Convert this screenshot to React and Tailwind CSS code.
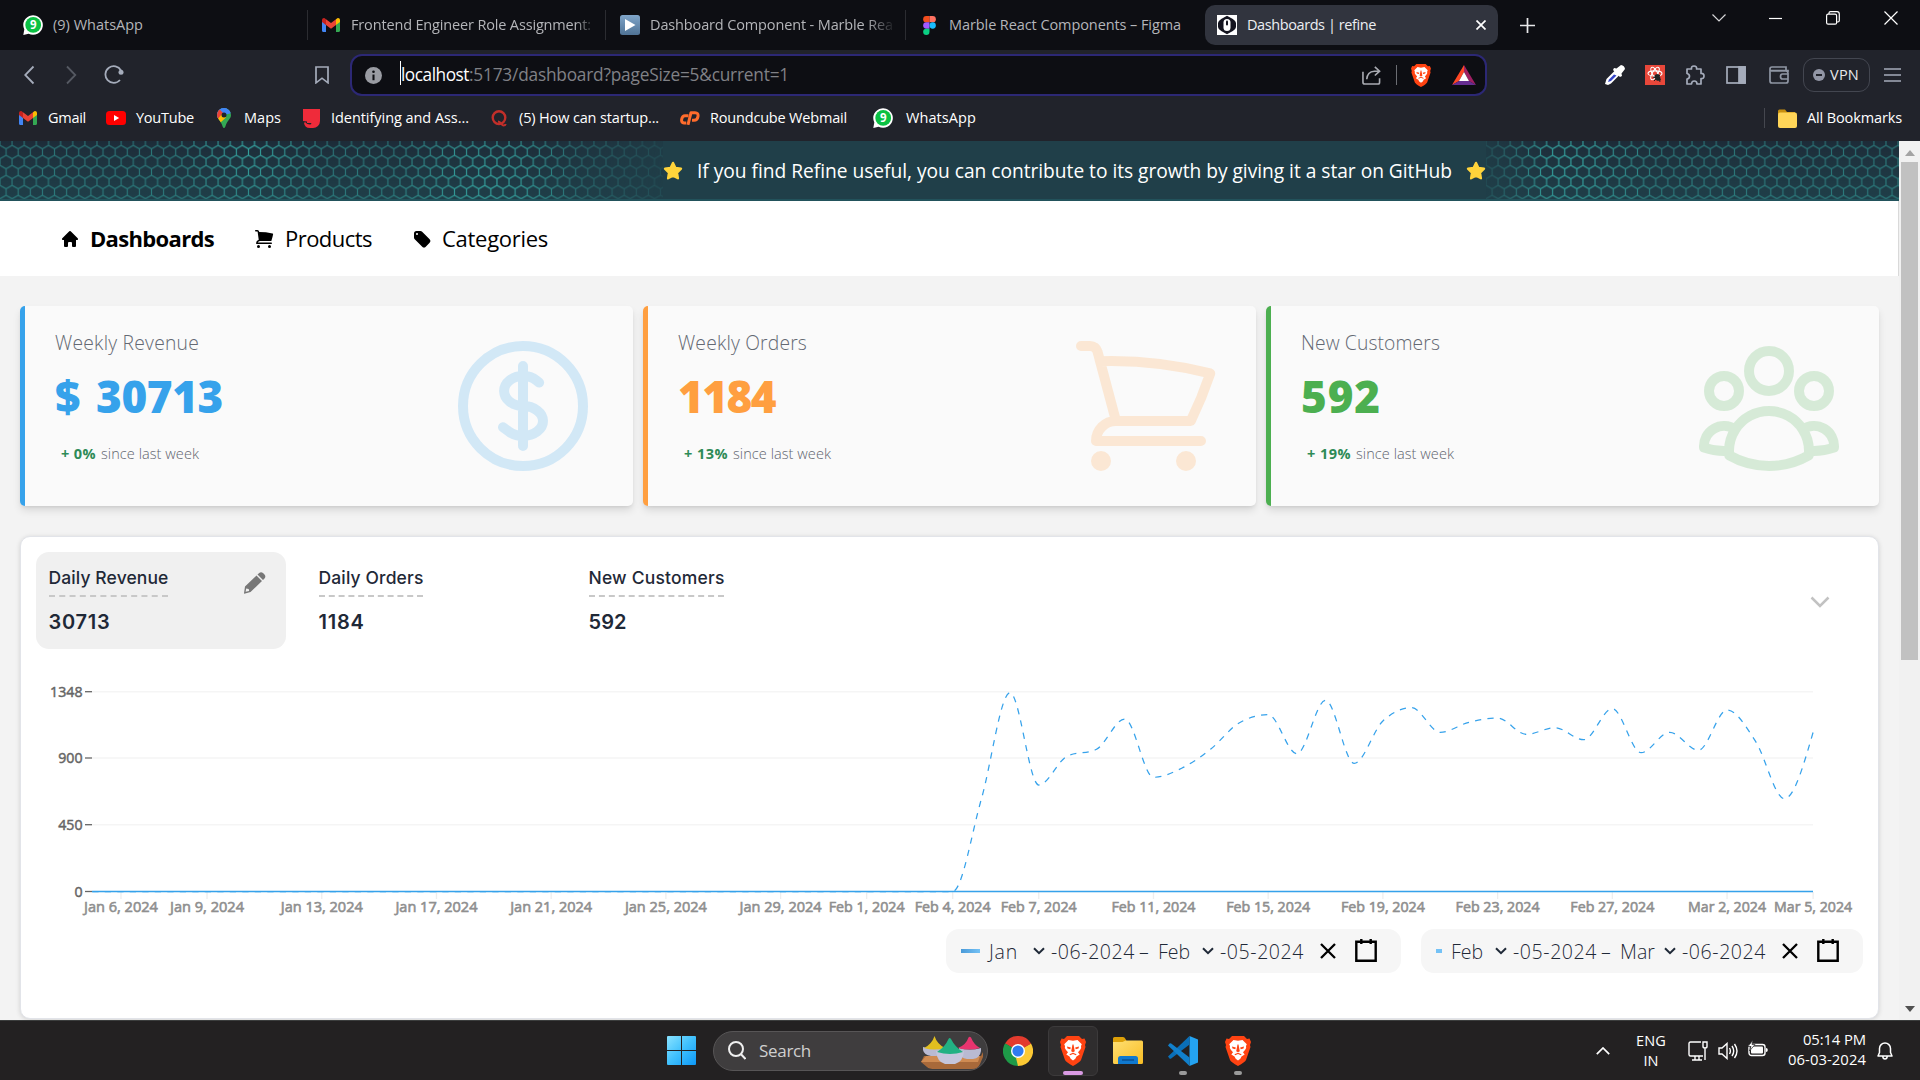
import React, { useLayoutEffect, useRef, useState } from "react";
import { HiOutlineCurrencyDollar, HiOutlineShoppingCart, HiOutlineUserGroup, HiMiniHome, HiMiniShoppingCart, HiMiniTag } from "react-icons/hi2";

/* Single line of text, tracked so that it fills the width of its box. */
function Fit({ className = "", children }) {
  const box = useRef(null);
  const line = useRef(null);
  const [spacing, setSpacing] = useState(0);
  useLayoutEffect(() => {
    const natural = line.current.getBoundingClientRect().width;
    setSpacing((box.current.clientWidth - natural) / String(children).length);
  }, []);
  return (
    <span ref={box} className={"block shrink-0 whitespace-nowrap " + className}>
      <span ref={line} className="inline-block" style={{ letterSpacing: spacing + "px" }}>
        {children}
      </span>
    </span>
  );
}

/* ---------- logos ---------- */

function WhatsAppBadge() {
  return (
    <svg viewBox="0 0 20 20" className="size-5 shrink-0">
      <path d="M0.3 20 L1.3 14.5 A9.8 9.8 0 1 1 5.6 18.8Z" fill="#fff" />
      <circle cx="10.2" cy="9.9" r="7.9" fill="#0ac143" />
      <text x="10.2" y="14" textAnchor="middle" fontSize="11.5" fontWeight="700" fill="#fff" fontFamily="Open Sans, sans-serif">9</text>
    </svg>
  );
}

function GmailLogo() {
  return (
    <svg viewBox="0 0 18 14" className="h-[14px] w-[18px] shrink-0">
      <path d="M0 2v10.8C0 13.5.5 14 1.2 14H4V6.5Z" fill="#4285f4" />
      <path d="M18 2v10.8c0 .7-.5 1.2-1.2 1.2H14V6.500Z" fill="#34a853" />
      <path d="M14 1.300V7l4-3V2.200C18 .2 15.800-.6 14.400.9Z" fill="#fbbc04" />
      <path d="M4 1.300V7L0 4V2.200C0 .2 2.200-.6 3.600.9Z" fill="#c5221f" />
      <path d="M4 7V1.300l5 3.700 5-3.700V7l-5 3.800Z" fill="#ea4335" />
    </svg>
  );
}

function PlayLogo() {
  return (
    <svg viewBox="0 0 20 20" className="size-5 shrink-0">
      <defs>
        <linearGradient id="play" x2="0" y2="1">
          <stop stopColor="#7fa5c9" />
          <stop offset="1" stopColor="#4f7295" />
        </linearGradient>
      </defs>
      <rect width="20" height="20" rx="2.500" fill="url(#play)" />
      <path d="M5 4l10.500 6L5 16Z" fill="#fff" />
    </svg>
  );
}

function FigmaLogo() {
  return (
    <svg viewBox="0 0 12 18" className="h-[19px] w-[13px] shrink-0">
      <path d="M3 0h3v6H3a3 3 0 0 1 0-6Z" fill="#f24e1e" />
      <path d="M6 0h3a3 3 0 0 1 0 6H6Z" fill="#ff7262" />
      <path d="M3 6h3v6H3a3 3 0 0 1 0-6Z" fill="#a259ff" />
      <circle cx="9" cy="9" r="3" fill="#1abcfe" />
      <path d="M3 12h3v3a3 3 0 1 1-3-3Z" fill="#0acf83" />
    </svg>
  );
}

function RefineLogo() {
  return (
    <svg viewBox="0 0 20 20" className="size-5 shrink-0">
      <rect width="20" height="20" fill="#fff" />
      <path d="M10 .800l5.800 3.100Q19 6 19 8v4q0 2-3.200 4.100L10 19.200l-5.800-3.100Q1 14 1 12V8q0-2 3.200-4.100Z" fill="#14141f" />
      <rect x="6.500" y="4" width="7" height="12" rx="3.500" fill="#fff" />
      <path d="M10 6.500v3" stroke="#14141f" strokeWidth="2" strokeLinecap="round" />
    </svg>
  );
}

function BraveLogo({ className }) {
  return (
    <svg viewBox="0 0 26 30" className={"shrink-0 " + className}>
      <path d="M7 0h12l3 3 2.500-.5L26 6l-1 3 .5 2-4.500 13q-1 2-8 6-7-4-8-6L.5 11 1 9 0 6l1.500-3.500L4 3Z" fill="#ff4312" />
      <path d="M13 4.800l4.500-.8 4.300 4.300-.8 1.700q.8 2-1 4l-2 2.300 1.700 2.200-3.200 2-1.200 2.200-2.300 1.800-2.300-1.800-1.200-2.200-3.200-2L8 16.300 6 14q-1.800-2-1-4l-.8-1.700L8.500 4Z" fill="#fff" />
      <path d="M7 10.500l3.800 1-.5 1.700-2.800-.7ZM19 10.500l-3.800 1 .5 1.700 2.800-.7ZM12.500 8.500h1l1.300 6.800-1.800 1-1.800-1ZM9.500 18.200l3.500-1.500 3.500 1.500-.5 1L13 18l-3 1.200Z" fill="#ff4312" />
    </svg>
  );
}

function BatLogo() {
  return (
    <svg viewBox="0 0 24 20" className="h-5 w-6 shrink-0">
      <path d="M12 0L0 20l7-4 5-9Z" fill="#ff4724" />
      <path d="M12 0l12 20-7-4-5-9Z" fill="#9e1f63" />
      <path d="M0 20h24l-7-4H7Z" fill="#662d91" />
      <path d="M12 7l5 9H7Z" fill="#fff" />
    </svg>
  );
}

function CpanelLogo() {
  return (
    <svg viewBox="0 0 20 14" className="h-[14px] w-5 shrink-0" fill="none" stroke="#ff6c2c" strokeWidth="3" strokeLinejoin="round">
      <path d="M8.500 4.700H5Q2.300 4.700 1.700 8.200T4 12H6.300" />
      <path d="M8 13.800L11 1.700H15Q18.600 1.700 18 5.500T14 9.300H12" />
    </svg>
  );
}

function YouTubeLogo() {
  return (
    <svg viewBox="0 0 20 14" className="h-[14px] w-5 shrink-0">
      <rect width="20" height="14" rx="3.500" fill="#f00" />
      <path d="M8 4l5.200 3L8 10Z" fill="#fff" />
    </svg>
  );
}

function MapsLogo() {
  return (
    <svg viewBox="0 0 14 20" className="h-5 w-[14px] shrink-0">
      <defs>
        <clipPath id="pin">
          <path d="M7 0a7 7 0 0 1 7 7c0 4-4 5.500-5.600 11.500Q7.800 20 7 20t-1.400-1.500C4 12.500 0 11 0 7a7 7 0 0 1 7-7Z" />
        </clipPath>
      </defs>
      <g clipPath="url(#pin)">
        <rect width="14" height="20" fill="#34a853" />
        <path d="M-1-1h16v6L7 7 2 13Z" fill="#4285f4" />
        <path d="M0 12L11-1 4-1-2 6Z" fill="#4285f4" />
        <path d="M-1 2l3.500-.8L7 6-1 13Z" fill="#ea4335" />
        <path d="M0 12L5 6l4 3.500L3 15Z" fill="#fbbc04" />
      </g>
      <circle cx="7" cy="7" r="2.500" fill="#21232b" />
    </svg>
  );
}

function JusticeLogo() {
  return (
    <svg viewBox="0 0 17 19" className="h-[19px] w-[17px] shrink-0">
      <path d="M0 0h17v12a7 7 0 0 1-7 7H7a6 6 0 0 1-6-5l1-1q2 2.500 5 2.500 2-.3 1-1.500H4v-1.500L0 12Z" fill="#ef2b3a" />
    </svg>
  );
}

function QuoraLogo() {
  return (
    <svg viewBox="0 0 16 17" className="h-[17px] w-4 shrink-0" fill="none" stroke="#c22f2a" strokeWidth="2.400">
      <ellipse cx="8" cy="7.600" rx="6.300" ry="6.400" />
      <path d="M7 11.500c3 0 3.500 4 5.500 4q1.800 0 2.300-1.500" strokeWidth="2" />
    </svg>
  );
}

function WindowsLogo() {
  return (
    <svg viewBox="0 0 29 29" className="size-[29px] shrink-0">
      <defs>
        <linearGradient id="win" x2="1" y2="1" gradientUnits="userSpaceOnUse" x1="0" y1="0" gradientTransform="scale(29)">
          <stop stopColor="#8ae3ff" />
          <stop offset=".5" stopColor="#3fc0fd" />
          <stop offset="1" stopColor="#0d98f7" />
        </linearGradient>
      </defs>
      <path d="M1 0h13v14H0V1Q0 0 1 0ZM15 0h13q1 0 1 1v13H15ZM0 15h14v14H1q-1 0-1-1ZM15 15h14v13q0 1-1 1H15Z" fill="url(#win)" />
    </svg>
  );
}

function HoliBowls() {
  return (
    <svg viewBox="0 0 62 33" className="h-[33px] w-[62px] shrink-0">
      <path d="M3 20h57l2-4v5l-3 7q-2 5-8 5H14q-6 0-8-2l-6-5Z" fill="#a8693a" />
      <path d="M5 20h54l-2 6H0Z" fill="#cf8b52" />
      <path d="M2 11q11 3 21 0v3q-1 6-8 6h-5q-7-1-8-6ZM38 12q11 3 22 0v3q-1 7-8 8h-6q-7-1-8-8Z" fill="#b9bad2" />
      <path d="M3 12Q11 8 13.500 0 16 8 24 12q-11 3-21 0Z" fill="#e2bf1f" />
      <path d="M37 12q8-3 10.500-10.500Q48.500 0 50 1.500 53 9 59 12q-11 3-22 0Z" fill="#e8346f" />
      <path d="M15 15q14 3 28 0-1 11-9 13H24q-8-2-9-13Z" fill="#c5c6dc" />
      <path d="M16 16Q24 11 27.500 3q1-2 2.500 0Q34 11 42 16q-13 4-26 0Z" fill="#22b183" />
    </svg>
  );
}

function ChromeLogo() {
  return (
    <svg viewBox="-15 -15 30 30" className="size-[30px] shrink-0">
      <path d="M0 0L-13-7.500A15 15 0 0 1 13-7.500Z" fill="#e33b2e" />
      <path d="M0 0L13-7.500A15 15 0 0 1 0 15Z" fill="#fcc934" />
      <path d="M0 0L0 15A15 15 0 0 1-13-7.500Z" fill="#1e9a48" />
      <path d="M-13-7.500h26L6-3.500 0-7Z" fill="#e33b2e" />
      <path d="M-6 3.500L-13-7.500-6-3.500Z" fill="#1e9a48" />
      <path d="M6 3.500L0 15-2 7Z" fill="#fcc934" />
      <circle r="7" fill="#fff" />
      <circle r="5.600" fill="#2f7bf0" />
    </svg>
  );
}

function ExplorerLogo() {
  return (
    <svg viewBox="0 0 30 27" className="h-[27px] w-[30px] shrink-0">
      <defs>
        <linearGradient id="folder" x2="1" y2="1">
          <stop stopColor="#ffdf73" />
          <stop offset="1" stopColor="#f8bd24" />
        </linearGradient>
      </defs>
      <path d="M0 1.500Q0 0 1.500 0H10q1.500 0 2.500 2l1 2H28v5H0Z" fill="#dda008" />
      <path d="M0 5h9.500l3-1.500H28.500Q30 3.500 30 5v20.500Q30 27 28.500 27h-27Q0 27 0 25.500Z" fill="url(#folder)" />
      <path d="M5 27v-5.500Q5 19 7.500 19h15q2.500 0 2.500 2.500V27Z" fill="#1079cf" />
      <path d="M9 23h12" stroke="#0a4a8a" strokeWidth="1.300" />
    </svg>
  );
}

function VsCodeLogo() {
  return (
    <svg viewBox="0 0 30 30" className="size-[30px] shrink-0">
      <path d="M21.500 0L30 3.500v23L21.500 30Z" fill="#24a3f1" />
      <path d="M0 20.500L21.500 0v8.500L3.200 22.500q-1 .6-1.700 0Z" fill="#0a6fb8" />
      <path d="M0 9.500l1.500-2q.700-.600 1.700 0L21.500 21.500V30Z" fill="#1180cc" />
    </svg>
  );
}

/* ---------- browser chrome ---------- */

function TabBar() {
  return (
    <div className="flex h-[50px] shrink-0 items-center bg-[#0d0e13] text-[14.500px] leading-5 text-[#b4b5b9]">
      <div className="flex w-[307px] items-center gap-[10px] pl-[23px]">
        <WhatsAppBadge />
        <Fit className="w-[90px]">(9) WhatsApp</Fit>
      </div>
      <div className="flex h-[30px] w-[298px] items-center gap-[11px] border-l border-[#2b2c31] pl-[14px]">
        <GmailLogo />
        <div className="w-[244px] [mask-image:linear-gradient(to_right,black_92%,transparent)]">
          <Fit className="w-[240px]">Frontend Engineer Role Assignment:</Fit>
        </div>
      </div>
      <div className="flex h-[30px] w-[300px] items-center gap-[10px] border-l border-[#2b2c31] pl-[14px]">
        <PlayLogo />
        <div className="w-[246px] [mask-image:linear-gradient(to_right,black_88%,transparent)]">
          <Fit className="w-[243px]">Dashboard Component - Marble Rea</Fit>
        </div>
      </div>
      <div className="flex h-[30px] w-[300px] items-center gap-[13px] border-l border-[#2b2c31] pl-[17px]">
        <FigmaLogo />
        <Fit className="w-[232px]">Marble React Components – Figma</Fit>
      </div>
      <div className="flex h-10 w-[293px] items-center rounded-[10px] bg-[#31343e] pl-3 text-[#eceef2]">
        <RefineLogo />
        <Fit className="ml-[10px] w-[129px]">Dashboards | refine</Fit>
        <svg viewBox="0 0 10 10" className="ml-[100px] size-[10px]" stroke="#fff" strokeWidth="1.700">
          <path d="M.5.5l9 9M9.500.5l-9 9" />
        </svg>
      </div>
      <svg viewBox="0 0 14 14" className="ml-[22px] size-[15px]" stroke="#e8e8ea" strokeWidth="1.600">
        <path d="M7 0v14M0 7h14" />
      </svg>
      <div className="mb-[14px] ml-[177px] flex items-center">
        <svg viewBox="0 0 14 14" className="size-[14px]" fill="none" stroke="#d6d6d8" strokeWidth="1.200">
          <path d="M.5 3.500L7 10l6.500-6.500" />
        </svg>
        <svg viewBox="0 0 14 14" className="ml-[43px] size-[14px]" stroke="#fff" strokeWidth="1.200">
          <path d="M0 7.500h13" />
        </svg>
        <svg viewBox="0 0 14 14" className="ml-[43px] size-[14px]" fill="none" stroke="#fff" strokeWidth="1.200">
          <rect x=".6" y="3.200" width="10" height="10" rx="1.500" />
          <path d="M3 3V2Q3 .7 4.500.7H11q2.300 0 2.300 2.300v6.500q0 1.500-1.500 1.500h-1" />
        </svg>
        <svg viewBox="0 0 14 14" className="ml-[44px] size-[14px]" stroke="#fff" strokeWidth="1.200">
          <path d="M.5.5l13 13M13.500.5l-13 13" />
        </svg>
      </div>
    </div>
  );
}

function Toolbar() {
  return (
    <div className="flex h-[50px] shrink-0 items-center bg-[#21232b]">
      <svg viewBox="0 0 100 20" className="ml-[24px] h-5 w-[100px]" fill="none" strokeWidth="1.800">
        <path d="M9.500 1.500L1.200 10l8.300 8.500" stroke="#a5acbb" />
        <path d="M43 1.500l8.300 8.500L43 18.500" stroke="#555962" />
        <path d="M96 15A8.300 8.300 0 1 1 97 5.500" stroke="#a5acbb" />
        <circle cx="97" cy="7.200" r="2.500" fill="#a5acbb" />
      </svg>
      <svg viewBox="0 0 14 18" className="ml-[191px] h-[18px] w-[14px]" fill="none" stroke="#a5acbb" strokeWidth="1.700">
        <path d="M1 1h12v15.800l-6-4.600-6 4.600Z" />
      </svg>
      <div className="ml-[21px] flex h-[42px] w-[1137px] items-center rounded-[12px] border-[2.500px] border-[#2c2875] bg-[#0d0e13] pl-[13px] text-[17.300px]">
        <svg viewBox="0 0 18 18" className="size-[17px]">
          <circle cx="9" cy="9" r="9" fill="#9a9ca3" />
          <path d="M9 8v6" stroke="#0d0e13" strokeWidth="2.200" />
          <circle cx="9" cy="5" r="1.400" fill="#0d0e13" />
        </svg>
        <span className="mb-1 ml-[18px] h-6 w-px bg-white" />
        <Fit className="mb-px w-[68px] text-white">localhost</Fit>
        <Fit className="mb-px w-[320px] text-[#808186]">:5173/dashboard?pageSize=5&current=1</Fit>
        <svg viewBox="0 0 20 20" className="ml-[573px] size-[19px]" fill="none" stroke="#a9abb2" strokeWidth="1.700">
          <path d="M1 6v11q0 2 2 2h14q1.500 0 1.500-2v-4" />
          <path d="M5 14Q5.500 6 13 5.500h5M13.500 1L18.500 5.500 13.500 10" />
        </svg>
        <span className="ml-[15px] h-5 w-px bg-[#6b6d73]" />
        <BraveLogo className="ml-[14px] h-[23px] w-5" />
        <span className="ml-[21px]"><BatLogo /></span>
      </div>
      <svg viewBox="0 0 20 20" className="ml-[118px] size-5">
        <path d="M3 20l-3-1 1.500-5L10 5.500 14.500 10 6 18.500Z" fill="#fff" />
        <path d="M3 17l1-2.500 5-5 2.500 1L6 16Z" fill="#3546c9" />
        <path d="M9 3l2.500.500L16 0q3.500.500 4 4l-3.500 4.500.5 2.500-2 1L8 5Z" fill="#fff" />
      </svg>
      <svg viewBox="0 0 20 20" className="ml-5 size-5" fill="none" stroke="#fff" strokeWidth="1.100">
        <rect width="20" height="20" fill="#e8473a" stroke="none" />
        <ellipse cx="10" cy="8.500" rx="7" ry="2.600" />
        <ellipse cx="10" cy="8.500" rx="7" ry="2.600" transform="rotate(60 10 8.500)" />
        <ellipse cx="10" cy="8.500" rx="7" ry="2.600" transform="rotate(120 10 8.500)" />
        <ellipse cx="12.500" cy="12.500" rx="2.600" ry="3.600" fill="#222" stroke="none" transform="rotate(-30 12.500 12.500)" />
        <path d="M8 12l8 3M9 16l6-6M13 9l2 8" stroke="#222" strokeWidth="1" />
      </svg>
      <svg viewBox="0 0 20 20" className="ml-5 size-5" fill="none" stroke="#a5acbb" strokeWidth="1.700" strokeLinejoin="round">
        <path d="M2 4h4.500Q6 1 9 1t2.600 3H16v4.500q3-.3 3 2.500t-3 2.600V19h-4q0-3-2.700-3T6.500 19H2v-5q2.500-.4 2.500-2.700T2 8.500Z" />
      </svg>
      <svg viewBox="0 0 20 18" className="ml-[21px] h-[18px] w-5" fill="none" stroke="#a5acbb" strokeWidth="1.700">
        <rect x="1" y="1" width="18" height="16" />
        <rect x="13" y="1" width="6" height="16" fill="#a5acbb" />
      </svg>
      <svg viewBox="0 0 20 18" className="ml-[23px] h-[18px] w-5" fill="none" stroke="#8f96a4" strokeWidth="1.700">
        <path d="M19 6V4.500H1M17 4V1H3Q1 1 1 3v12q0 2 2 2h14q2 0 2-2V7Q19 5.500 17 5H2" />
        <path d="M19 8h-5.500q-2 0-2 2.500t2 2.500H19" />
      </svg>
      <div className="ml-[14px] flex h-[34px] w-[67px] items-center gap-[5px] rounded-[11px] border border-[#434650] pl-[9px] text-[14.500px] text-[#e8e9ec]">
        <span className="flex size-[12px] shrink-0 items-center justify-center rounded-full bg-[#9296a5]">
          <span className="h-[1.500px] w-[6px] bg-[#21232b]" />
        </span>
        <Fit className="w-[29px]">VPN</Fit>
      </div>
      <svg viewBox="0 0 17 14" className="ml-[14px] h-[14px] w-[17px]" stroke="#a5acbb" strokeWidth="1.600">
        <path d="M0 1h17M0 7h17M0 13h17" />
      </svg>
    </div>
  );
}

function Bookmarks() {
  return (
    <div className="flex h-[41px] shrink-0 items-center bg-[#21232b] pb-[5px] pl-[19px] text-[14.500px] leading-5 text-white">
      <GmailLogo />
      <Fit className="ml-[11px] w-[38px]">Gmail</Fit>
      <span className="ml-5"><YouTubeLogo /></span>
      <Fit className="ml-[10px] w-[58px]">YouTube</Fit>
      <span className="ml-[23px]"><MapsLogo /></span>
      <Fit className="ml-[13px] w-[37px]">Maps</Fit>
      <span className="ml-[22px]"><JusticeLogo /></span>
      <Fit className="ml-[11px] w-[138px]">Identifying and Ass...</Fit>
      <span className="ml-[22px]"><QuoraLogo /></span>
      <Fit className="ml-[12px] w-[140px]">(5) How can startup...</Fit>
      <span className="ml-[21px]"><CpanelLogo /></span>
      <Fit className="ml-[10px] w-[137px]">Roundcube Webmail</Fit>
      <span className="ml-[26px]"><WhatsAppBadge /></span>
      <Fit className="ml-[13px] w-[70px]">WhatsApp</Fit>
      <span className="ml-[788px] h-5 w-px bg-[#45474f]" />
      <svg viewBox="0 0 19 19" className="ml-[13px] size-[19px]">
        <path d="M0 2Q0 .5 1.500.500H7L9 3h8v4H0Z" fill="#c78f0f" />
        <rect y="3.500" width="19" height="15.500" rx="2" fill="#ffd558" />
      </svg>
      <Fit className="ml-[10px] w-[95px]">All Bookmarks</Fit>
    </div>
  );
}

/* ---------- page ---------- */

function Star() {
  return (
    <svg viewBox="0 0 20 20" className="size-5 shrink-0">
      <path d="M10 1.800l2.500 5.100 5.600.8-4 4 .9 5.700-5-2.700-5 2.700.9-5.700-4-4 5.600-.8Z" fill="#ffd43b" stroke="#ffd43b" strokeWidth="2.200" strokeLinejoin="round" />
    </svg>
  );
}

function HexField({ id, glows, edge, className }) {
  return (
    <svg className={className}>
      <defs>
        <pattern id={id + "p"} width="12.12" height="20" patternUnits="userSpaceOnUse" patternTransform="translate(0 4.300)">
          <path d="M0 0L6.060 3.500 12.120 0M6.060 3.500V10M6.060 10L0 13.500V20M6.060 10L12.120 13.500V20" fill="none" stroke="#38b2ac" strokeWidth="1.100" />
        </pattern>
        {glows.map((g, i) => (
          <radialGradient key={i} id={id + "g" + i} gradientUnits="userSpaceOnUse" cx={g[0]} cy={g[1]} r={g[2]}>
            <stop stopColor="#fff" stopOpacity=".85" />
            <stop offset="1" stopColor="#fff" stopOpacity="0" />
          </radialGradient>
        ))}
        <linearGradient id={id + "e"} x1={edge[0]} x2={edge[1]} gradientUnits="userSpaceOnUse">
          <stop stopColor="#fff" />
          <stop offset="1" stopColor="#000" />
        </linearGradient>
        <linearGradient id={id + "s"} x2="0" y2="1">
          <stop stopColor="#1d2a37" stopOpacity=".9" />
          <stop offset="1" stopColor="#1f3f49" stopOpacity=".6" />
        </linearGradient>
        <mask id={id + "m"} maskUnits="userSpaceOnUse" x="0" y="0" width="700" height="60">
          <rect width="700" height="60" fill={"url(#" + id + "e)"} />
        </mask>
        <mask id={id + "n"} maskUnits="userSpaceOnUse" x="0" y="0" width="700" height="60">
          <rect width="700" height="60" fill="#888" />
          {glows.map((g, i) => (
            <rect key={i} width="700" height="60" fill={"url(#" + id + "g" + i + ")"} />
          ))}
        </mask>
      </defs>
      <g mask={"url(#" + id + "m)"}>
        <rect width="700" height="60" fill={"url(#" + id + "s)"} />
        <rect width="700" height="60" fill={"url(#" + id + "p)"} mask={"url(#" + id + "n)"} />
      </g>
    </svg>
  );
}

function Banner() {
  return (
    <div className="flex h-[60px] shrink-0 items-center border-b-2 border-[#22525b] bg-[#203f49]">
      <HexField id="hl" className="h-[58px] w-[663px] shrink-0" glows={[[250, 5, 80], [490, 40, 100]]} edge={[530, 700]} />
      <div className="flex items-center pt-[2px]">
        <Star />
        <Fit className="ml-[14px] w-[755px] text-[19.200px] font-medium text-white">
          If you find Refine useful, you can contribute to its growth by giving it a star on GitHub
        </Fit>
        <span className="ml-[14px]"><Star /></span>
      </div>
      <HexField id="hr" className="h-[58px] w-[413px] shrink-0" glows={[[78, 20, 100]]} edge={[60, -25]} />
    </div>
  );
}

function Nav() {
  return (
    <div className="flex h-[75px] shrink-0 items-center border-r border-[#d9d9d9] bg-white pl-[60px] text-[22px] text-black">
      <HiMiniHome className="size-5" />
      <Fit className="ml-[10px] w-[124px] font-bold">Dashboards</Fit>
      <HiMiniShoppingCart className="ml-[40px] size-5" />
      <Fit className="ml-[11px] w-[87px]">Products</Fit>
      <HiMiniTag className="ml-[40px] size-5" />
      <Fit className="ml-[10px] w-[106px]">Categories</Fit>
    </div>
  );
}

function StatCard({ border, color, Icon, title, titleW, value, valueW, pct, pctW, tailW }) {
  return (
    <div className={"flex h-[200px] w-[613px] justify-between rounded-[5px] border-l-[5px] bg-[#fafafa] pr-[30px] pl-[30px] shadow-[0_5px_8px_-1px_rgba(0,0,0,0.12),0_2px_4px_-2px_rgba(0,0,0,0.12)] " + border}>
      <div className="pt-[23px]">
        <Fit className={"text-[19.300px] leading-[28px] font-light text-[#646973] " + titleW}>{title}</Fit>
        <Fit className={"mt-[11px] text-[44px] leading-[56px] font-extrabold [word-spacing:5px] " + color + " " + valueW}>{value}</Fit>
        <div className="mt-[19px] flex gap-[5px] pl-[6px] text-[14.500px] leading-[22px]">
          <Fit className={"font-bold text-[#2e8b57] " + pctW}>{pct}</Fit>
          <Fit className={"font-light text-[#5f646e] " + tailW}>since last week</Fit>
        </div>
      </div>
      <Icon className={"mt-5 size-40 opacity-20 " + color} />
    </div>
  );
}

function MetricTab({ active, label, labelW, value, valueW }) {
  return (
    <div className={"flex h-[97px] w-[250px] justify-between rounded-[13px] pt-[13px] pr-[20px] pl-[12.500px] font-['Inter',sans-serif] text-[#1f2937] " + (active ? "bg-[#f0f0f0]" : "")}>
      <div>
        <div className={"border-b-2 border-dashed border-[#c8c8c8] pb-[4px] " + labelW}>
          <Fit className={"text-[17.500px] leading-[26px] font-medium " + labelW}>{label}</Fit>
        </div>
        <Fit className={"mt-[11px] text-[20px] leading-[28px] font-semibold " + valueW}>{value}</Fit>
      </div>
      {active && (
        <svg viewBox="0 0 22 22" className="mt-[7px] size-[22px]">
          <path fillRule="evenodd" d="M1 14.500L12.500 3.500l5.500 5.500L6.500 20 .3 21.700Q0 21.800 0 21.300ZM2.200 16.500l-.6 3.200 3.600-.8-.5-2Z" fill="#777" />
          <path d="M13.500 2.500L15.200 1Q17-.6 19 1l1.500 1.600Q22.200 4.500 20.500 6.500L19 8Z" fill="#777" />
        </svg>
      )}
    </div>
  );
}

const X0 = 92.3;
const STEP = 28.68;
const BASE = 891.5;
const RISE = [799, 692.7, 785, 756, 749.5, 719, 777.3, 768, 749, 722.7, 714.7, 753.7, 700.3, 763.3, 721, 707.7, 732.3, 722.3, 718, 734.3, 727.7, 739.7, 708.7, 752.7, 732.3, 750.3, 710, 741.7, 798.7, 732.3];
const POINTS = Array.from({ length: 31 }, () => BASE).concat(RISE).map((y, i) => [X0 + STEP * i, y]);

const TICKS = [
  [1, "Jan 6, 2024"], [4, "Jan 9, 2024"], [8, "Jan 13, 2024"], [12, "Jan 17, 2024"], [16, "Jan 21, 2024"], [20, "Jan 25, 2024"],
  [24, "Jan 29, 2024"], [27, "Feb 1, 2024"], [30, "Feb 4, 2024"], [33, "Feb 7, 2024"], [37, "Feb 11, 2024"], [41, "Feb 15, 2024"],
  [45, "Feb 19, 2024"], [49, "Feb 23, 2024"], [53, "Feb 27, 2024"], [57, "Mar 2, 2024"], [60, "Mar 5, 2024"],
];
const LEVELS = [[691.7, "1348"], [758, "900"], [824.7, "450"], [891.5, "0"]];

/* Monotone cubic interpolation through the points. */
function monotone(pts) {
  const n = pts.length;
  const s = pts.slice(1).map((p, i) => (p[1] - pts[i][1]) / (p[0] - pts[i][0]));
  const m = pts.map((_, i) => {
    if (i === 0 || i === n - 1) return 0;
    const a = s[i - 1];
    const b = s[i];
    return (Math.sign(a) + Math.sign(b)) * Math.min(Math.abs(a), Math.abs(b), Math.abs(a + b) / 4) || 0;
  });
  m[n - 1] = (3 * s[n - 2] - m[n - 2]) / 2;
  let d = `M${pts[0][0]},${pts[0][1]}`;
  for (let i = 1; i < n; i++) {
    const [x0, y0] = pts[i - 1];
    const [x1, y1] = pts[i];
    const h = (x1 - x0) / 3;
    d += `C${x0 + h},${y0 + h * m[i - 1]},${x1 - h},${y1 - h * m[i]},${x1},${y1}`;
  }
  return d;
}

function Chart() {
  return (
    <svg viewBox="36 676 1827 244" className="mt-[27px] h-[244px] w-[1827px]" fontFamily="Open Sans, sans-serif">
      {LEVELS.map(([y, label]) => (
        <g key={label}>
          <path d={`M92 ${y}H1813`} stroke="#f5f5f5" strokeWidth="1.500" />
          <path d={`M85 ${y}H92`} stroke="#666" strokeWidth="1.300" />
          <text x="82.500" y={y + 5.3} textAnchor="end" fontSize="14.700" fill="#666" stroke="#666" strokeWidth=".5" textLength={label.length * 8.1} lengthAdjust="spacingAndGlyphs">{label}</text>
        </g>
      ))}
      {TICKS.map(([i, label]) => (
        <g key={label}>
          <path d={`M${X0 + STEP * i} 892V899`} stroke="#eee" strokeWidth="1.300" />
          <text x={X0 + STEP * i} y="912" textAnchor="middle" fontSize="14.500" fill="#8f8f8f" stroke="#8f8f8f" strokeWidth=".6" textLength={label[0] === "J" ? (label.length > 11 ? 82 : 74) : label[0] === "M" ? 78 : label.length > 11 ? 84 : 76} lengthAdjust="spacingAndGlyphs">{label}</text>
        </g>
      ))}
      <path d={`M92 ${BASE}H1813`} stroke="#36a2eb" strokeWidth="1.500" />
      <path d={monotone(POINTS)} fill="none" stroke="#36a2eb" strokeWidth="1.250" strokeDasharray="6.250 6.250" />
    </svg>
  );
}

function Caret({ className }) {
  return (
    <svg viewBox="0 0 12 8" className={"h-2 w-3 shrink-0 " + className} fill="none" stroke="#1f2937" strokeWidth="2">
      <path d="M1 1.200l5 5 5-5" />
    </svg>
  );
}

function PillActions() {
  return (
    <>
      <svg viewBox="0 0 16 16" className="ml-[16px] size-4 shrink-0" stroke="#000" strokeWidth="2.300">
        <path d="M1 1l14 14M15 1l-14 14" />
      </svg>
      <svg viewBox="0 0 22 23" className="mb-[1px] ml-[19px] h-[23px] w-[22px] shrink-0" fill="none" stroke="#000" strokeWidth="2.400">
        <path d="M1.300 2.800h19.400v18.900H1.300Z" />
        <path d="M6.300 0v5M15.700 0v5" />
      </svg>
    </>
  );
}

function DateRanges() {
  return (
    <div className="mt-[9px] ml-[910px] flex gap-[20px] text-[19.500px] leading-[30px] font-light text-[#1f2937]">
      <div className="flex h-11 w-[455px] items-center rounded-[13px] bg-[#f6f6f6] pl-[15px]">
        <span className="h-1 w-[19px] bg-linear-to-r from-[#4a9ad8] to-[#74c2f6]" />
        <Fit className="mt-[2px] ml-[9px] w-[29px]">Jan</Fit>
        <Caret className="ml-[15px]" />
        <Fit className="mt-[2px] ml-[6px] w-[84px]">-06-2024</Fit>
        <Fit className="mt-[2px] ml-[4px] w-[11px]">–</Fit>
        <Fit className="mt-[2px] ml-[8px] w-[32px]">Feb</Fit>
        <Caret className="ml-[12px]" />
        <Fit className="mt-[2px] ml-[6px] w-[84px]">-05-2024</Fit>
        <PillActions />
      </div>
      <div className="flex h-11 w-[442px] items-center rounded-[13px] bg-[#f6f6f6] pl-[15px]">
        <span className="h-1 w-[6px] bg-[#74c2f6]" />
        <Fit className="mt-[2px] ml-[9px] w-[32px]">Feb</Fit>
        <Caret className="ml-[12px]" />
        <Fit className="mt-[2px] ml-[6px] w-[84px]">-05-2024</Fit>
        <Fit className="mt-[2px] ml-[4px] w-[11px]">–</Fit>
        <Fit className="mt-[2px] ml-[8px] w-[35px]">Mar</Fit>
        <Caret className="ml-[9px]" />
        <Fit className="mt-[2px] ml-[6px] w-[84px]">-06-2024</Fit>
        <PillActions />
      </div>
    </div>
  );
}

function Page() {
  return (
    <div className="flex w-[1899px] flex-col bg-[#f3f3f3]">
      <Banner />
      <Nav />
      <div className="mt-[30px] flex gap-[10px] pl-5">
        <StatCard border="border-[#36a2eb]" color="text-[#36a2eb]" Icon={HiOutlineCurrencyDollar} title="Weekly Revenue" titleW="w-[144px]" value="$ 30713" valueW="w-[168px]" pct="+ 0%" pctW="w-[35px]" tailW="w-[98px]" />
        <StatCard border="border-[#ff9f40]" color="text-[#ff9f40]" Icon={HiOutlineShoppingCart} title="Weekly Orders" titleW="w-[129px]" value="1184" valueW="w-[97px]" pct="+ 13%" pctW="w-[44px]" tailW="w-[98px]" />
        <StatCard border="border-[#4caf50]" color="text-[#4caf50]" Icon={HiOutlineUserGroup} title="New Customers" titleW="w-[139px]" value="592" valueW="w-[80px]" pct="+ 19%" pctW="w-[44px]" tailW="w-[98px]" />
      </div>
      <div className="mt-[30px] ml-5 h-[483px] w-[1859px] shrink-0 rounded-[10px] border border-[#e2e4e9] bg-white px-[15px] pt-[15px] shadow-[0_1px_5px_rgba(0,0,0,0.14)]">
        <div className="flex items-center gap-5">
          <MetricTab active label="Daily Revenue" labelW="w-[119.500px]" value="30713" valueW="w-[62px]" />
          <MetricTab label="Daily Orders" labelW="w-[104.500px]" value="1184" valueW="w-[46px]" />
          <MetricTab label="New Customers" labelW="w-[135.500px]" value="592" valueW="w-[38px]" />
          <svg viewBox="0 0 20 12" className="mt-[2px] ml-auto mr-[33px] h-3 w-5" fill="none" stroke="#c2c2c2" strokeWidth="2.500">
            <path d="M1.500 1.500L10 10l8.500-8.500" />
          </svg>
        </div>
        <Chart />
        <DateRanges />
      </div>
    </div>
  );
}

function Scrollbar() {
  return (
    <div className="flex w-[21px] flex-col items-center justify-between bg-[#f1f1f1]">
      <div className="flex flex-col items-center">
        <svg viewBox="0 0 10 6" className="mt-[9px] h-[6px] w-[10px]" fill="#a3a3a3"><path d="M5 0l5 6H0Z" /></svg>
        <div className="mt-[6px] h-[498px] w-[17px] bg-[#c1c1c1]" />
      </div>
      <svg viewBox="0 0 10 6" className="mb-[8px] h-[6px] w-[10px]" fill="#505050"><path d="M5 6l5-6H0Z" /></svg>
    </div>
  );
}

/* ---------- taskbar ---------- */

function Taskbar() {
  return (
    <div className="flex h-[60px] shrink-0 items-center border-t border-[#3b3d3d] bg-[#232122] pl-[667px] text-white">
      <WindowsLogo />
      <div className="ml-[17px] flex h-10 w-[275px] items-center rounded-full border border-[#575556] bg-[#3f3d3e] pl-[14px]">
        <svg viewBox="0 0 18 19" className="h-[19px] w-[18px]" fill="none" stroke="#f0f0f0" strokeWidth="2">
          <circle cx="8" cy="8" r="7" />
          <path d="M12.800 13L17.500 18" />
        </svg>
        <Fit className="ml-[13px] w-[52px] text-[17px] text-[#cfcfcf]">Search</Fit>
        <span className="mt-[3px] ml-[110px]"><HoliBowls /></span>
      </div>
      <span className="ml-[15px]"><ChromeLogo /></span>
      <div className="ml-[15px] flex h-[50px] w-[50px] flex-col items-center rounded-[6px] border border-[#3c3a3b] bg-[#2f2d2e] pt-[9px]">
        <BraveLogo className="h-[30px] w-[26px]" />
        <span className="mt-[5px] h-1 w-5 rounded-full bg-[#d99ae3]" />
      </div>
      <span className="ml-[15px]"><ExplorerLogo /></span>
      <div className="ml-[25px] flex h-[50px] flex-col items-center pt-[10px]">
        <VsCodeLogo />
        <span className="mt-[5px] h-1 w-2 rounded-full bg-[#9a9a9a]" />
      </div>
      <div className="ml-[27px] flex h-[50px] flex-col items-center pt-[10px]">
        <BraveLogo className="h-[30px] w-[26px]" />
        <span className="mt-[5px] h-1 w-2 rounded-full bg-[#9a9a9a]" />
      </div>
      <svg viewBox="0 0 14 8" className="ml-[345px] h-2 w-[14px]" fill="none" stroke="#fff" strokeWidth="1.700">
        <path d="M.8 7.200L7 1l6.200 6.200" />
      </svg>
      <div className="ml-[26px] flex w-[30px] flex-col items-center text-[14.500px] leading-5">
        <Fit className="w-[30px]">ENG</Fit>
        <Fit className="w-[15px]">IN</Fit>
      </div>
      <svg viewBox="0 0 20 20" className="ml-[22px] size-5" fill="none" stroke="#fff" strokeWidth="1.400">
        <path d="M13 1H2.500Q1 1 1 2.500v11Q1 15 2.500 15H15M7 15v4M11 15v4M4 19h10" />
        <path d="M15 1h4v4.500q0 1.500-2 1.500t-2-1.500ZM17 7v12" />
      </svg>
      <svg viewBox="0 0 20 18" className="ml-[10px] h-[18px] w-5" fill="none" stroke="#fff" strokeWidth="1.400">
        <path d="M1 6h3l5-4.500v15L4 12H1Z" />
        <path d="M11.500 6q1.800 3 0 6M14 4q3.400 5 0 10M16.500 2q5 7 0 14" />
      </svg>
      <svg viewBox="0 0 20 18" className="mb-[3px] ml-[10px] h-[18px] w-5">
        <rect x="1" y="4.500" width="16" height="11" rx="2.500" fill="none" stroke="#fff" strokeWidth="1.400" />
        <rect x="3" y="6.500" width="12" height="7" rx="1" fill="#fff" />
        <path d="M18 8q1.800 0 1.800 2T18 12Z" fill="#fff" />
        <path d="M5 0L0 6.500h3L1.500 11 7 4.500H4Z" fill="#fff" stroke="#232122" strokeWidth=".7" />
      </svg>
      <div className="mb-[3px] ml-[21px] flex w-[77px] flex-col items-end text-[14.800px] leading-5">
        <Fit className="w-[63px]">05:14 PM</Fit>
        <Fit className="w-[78px]">06-03-2024</Fit>
      </div>
      <svg viewBox="0 0 16 18" className="ml-[11px] h-[18px] w-4" fill="none" stroke="#fff" strokeWidth="1.500" strokeLinejoin="round">
        <path d="M8 1a5.500 5.500 0 0 1 5.500 5.500v4L15 14H1l1.500-3.500v-4A5.500 5.500 0 0 1 8 1ZM5.800 14.500Q6 17 8 17t2.200-2.500" />
      </svg>
    </div>
  );
}

export default function App() {
  return (
    <div className="flex h-[1080px] w-[1920px] flex-col overflow-hidden font-['Open_Sans','Noto_Sans',sans-serif]">
      <TabBar />
      <Toolbar />
      <Bookmarks />
      <div className="flex h-[879px] shrink-0 overflow-hidden">
        <Page />
        <Scrollbar />
      </div>
      <Taskbar />
    </div>
  );
}
